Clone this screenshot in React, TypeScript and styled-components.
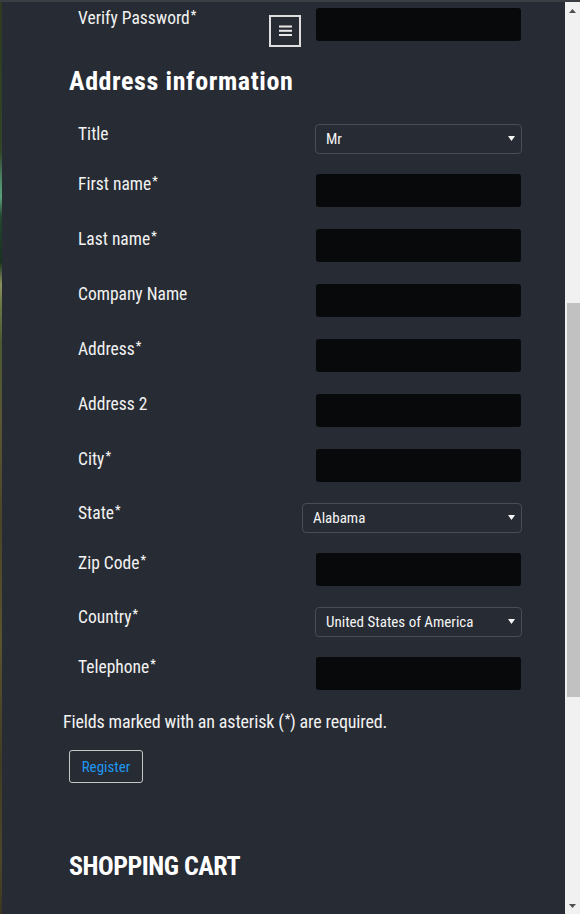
import React from "react";
import styled, { createGlobalStyle } from "styled-components";

const GlobalStyle = createGlobalStyle`
  html, body { margin: 0; padding: 0; background: #272b33; }
  body {
    font-family: "Roboto Condensed", Roboto, "Liberation Sans", sans-serif;
    color: #f2f2f2;
    overflow: hidden;
  }
  * { box-sizing: border-box; }
`;

const Frame = styled.div`
  display: flex;
  height: 914px;
  border-top: 2px solid #3a3d42;
  overflow: hidden;
`;

const Edge = styled.div`
  width: 2px;
  flex: none;
  background: linear-gradient(
    to bottom,
    #2e3a22 0px,
    #33442a 150px,
    #4f8c6c 180px,
    #5aa07a 195px,
    #24452f 215px,
    #18321f 260px,
    #8a9060 282px,
    #6f7a48 300px,
    #4c5a33 340px,
    #5a5634 420px,
    #4a4528 520px,
    #5b532f 640px,
    #403c24 760px,
    #4d4629 860px,
    #3a3620 912px
  );
`;

const Main = styled.main`
  position: relative;
  flex: 1;
  background: #272b33;
  padding: 6px 43px 0 61px;
`;

const MenuToggle = styled.button`
  position: absolute;
  left: 267px;
  top: 13px;
  width: 32px;
  height: 32px;
  border: 2px solid #dedede;
  background: #272b33;
  padding: 0;
  display: flex;
  align-items: center;
  justify-content: center;
  cursor: pointer;
`;

const Form = styled.form`
  display: flex;
  flex-direction: column;
`;

const Row = styled.div<{ $select?: boolean }>`
  display: flex;
  justify-content: space-between;
  align-items: flex-start;
  padding-left: 15px;
  margin-top: ${(p) => (p.$select ? "-1px" : "0")};
  margin-bottom: ${(p) => (p.$select ? "20px" : "22px")};
`;

const Label = styled.label`
  font-size: 17.5px;
  line-height: 20px;
  color: #f2f2f2;
  white-space: nowrap;
`;

const Req = styled.span`
  font-size: 12px;
  line-height: 0;
  vertical-align: 5px;
  margin-left: 1px;
  font-weight: 700;
`;

const TextInput = styled.input`
  width: 205px;
  height: 33px;
  margin-right: 1px;
  border: none;
  border-radius: 3px;
  background: #08090b;
  color: #fff;
  padding: 0 10px;
  outline: none;
`;

const SelectWrap = styled.div<{ $w: number }>`
  position: relative;
  width: ${(p) => p.$w}px;
  height: 30px;
`;

const Select = styled.select`
  appearance: none;
  -webkit-appearance: none;
  width: 100%;
  height: 100%;
  border: 1px solid #484c55;
  border-radius: 4px;
  background: #272b33;
  color: #f5f5f5;
  font-family: "Roboto Condensed", Roboto, sans-serif;
  font-size: 15px;
  padding: 0 20px 0 10px;
  outline: none;
`;

const Caret = styled.svg`
  position: absolute;
  right: 7px;
  top: 12px;
  pointer-events: none;
`;

const SectionTitle = styled.h2<{ $mt: number; $ls: number }>`
  margin: ${(p) => p.$mt}px 0 0 6px;
  font-family: "Roboto Condensed", Roboto, sans-serif;
  font-weight: 700;
  font-size: 26px;
  line-height: 30px;
  letter-spacing: ${(p) => p.$ls}px;
  color: #ffffff;
`;

const Note = styled.p`
  margin: -1px 0 0 0;
  font-size: 18px;
  line-height: 22px;
  letter-spacing: -0.15px;
  color: #f2f2f2;
  white-space: nowrap;
`;

const RegisterButton = styled.button`
  display: block;
  margin: 17px 0 0 6px;
  height: 33px;
  width: 74px;
  padding: 0;
  border: 1px solid #c6c6c6;
  border-radius: 3px;
  background: transparent;
  color: #1e98f2;
  font-family: "Roboto Condensed", Roboto, sans-serif;
  font-size: 15px;
  cursor: pointer;
`;

const Scrollbar = styled.div`
  width: 15px;
  flex: none;
  display: flex;
  flex-direction: column;
  background: #f1f1f1;
`;

const ArrowButton = styled.div`
  height: 17px;
  flex: none;
  display: flex;
  align-items: center;
  justify-content: center;
`;

const Track = styled.div`
  flex: 1;
  padding-left: 2px;
`;

const Thumb = styled.div`
  width: 13px;
  background: #c1c1c1;
`;

const MenuIcon = () => (
  <svg width="13" height="12" viewBox="0 0 13 12">
    <rect x="0" y="0.5" width="13" height="2" fill="#e8e8e8" />
    <rect x="0" y="4.8" width="13" height="2" fill="#e8e8e8" />
    <rect x="0" y="9" width="13" height="2" fill="#e8e8e8" />
  </svg>
);

const CaretDown = () => (
  <Caret width="7" height="5" viewBox="0 0 7 5">
    <path d="M0 0 H7 L3.5 5 Z" fill="#f5f5f5" />
  </Caret>
);

type Field =
  | { label: string; req?: boolean; kind: "text" }
  | { label: string; req?: boolean; kind: "select"; value: string; width: number };

const fields: Field[] = [
  { label: "Title", kind: "select", value: "Mr", width: 207 },
  { label: "First name", req: true, kind: "text" },
  { label: "Last name", req: true, kind: "text" },
  { label: "Company Name", kind: "text" },
  { label: "Address", req: true, kind: "text" },
  { label: "Address 2", kind: "text" },
  { label: "City", req: true, kind: "text" },
  { label: "State", req: true, kind: "select", value: "Alabama", width: 220 },
  { label: "Zip Code", req: true, kind: "text" },
  { label: "Country", req: true, kind: "select", value: "United States of America", width: 207 },
  { label: "Telephone", req: true, kind: "text" },
];

const FieldLabel = ({ text, req }: { text: string; req?: boolean }) => (
  <Label>
    {text}
    {req && <Req>*</Req>}
  </Label>
);

export default function App() {
  return (
    <>
      <GlobalStyle />
      <Frame>
        <Edge />
        <Main>
          <MenuToggle aria-label="Menu">
            <MenuIcon />
          </MenuToggle>
          <Form onSubmit={(e) => e.preventDefault()}>
            <Row>
              <FieldLabel text="Verify Password" req />
              <TextInput type="password" />
            </Row>
            <SectionTitle $mt={3} $ls={0.6}>
              Address information
            </SectionTitle>
            <div style={{ height: 29 }} />
            {fields.map((f) =>
              f.kind === "text" ? (
                <Row key={f.label}>
                  <FieldLabel text={f.label} req={f.req} />
                  <TextInput type="text" />
                </Row>
              ) : (
                <Row key={f.label} $select>
                  <FieldLabel text={f.label} req={f.req} />
                  <SelectWrap $w={f.width}>
                    <Select defaultValue={f.value}>
                      <option>{f.value}</option>
                    </Select>
                    <CaretDown />
                  </SelectWrap>
                </Row>
              )
            )}
          </Form>
          <Note>
            Fields marked with an asterisk (<Req>*</Req>) are required.
          </Note>
          <RegisterButton type="button">Register</RegisterButton>
          <SectionTitle $mt={68} $ls={-0.5}>
            SHOPPING CART
          </SectionTitle>
        </Main>
        <Scrollbar>
          <ArrowButton>
            <svg width="7" height="4" viewBox="0 0 7 4">
              <path d="M0 4 L3.5 0 L7 4 Z" fill="#505050" />
            </svg>
          </ArrowButton>
          <Track>
            <Thumb style={{ marginTop: 284, height: 394 }} />
          </Track>
          <ArrowButton>
            <svg width="7" height="4" viewBox="0 0 7 4">
              <path d="M0 0 L7 0 L3.5 4 Z" fill="#505050" />
            </svg>
          </ArrowButton>
        </Scrollbar>
      </Frame>
    </>
  );
}
